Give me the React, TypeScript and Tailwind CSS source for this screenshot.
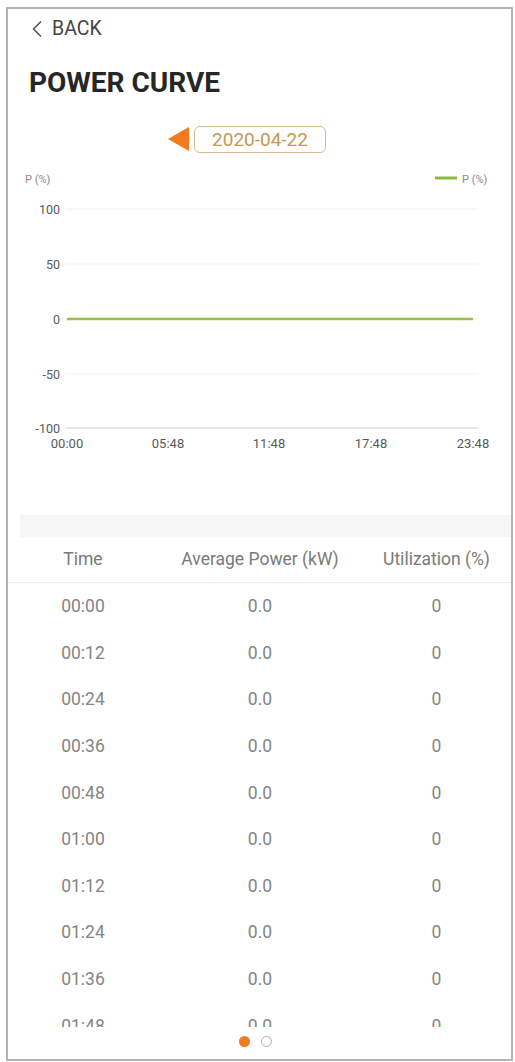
import React from 'react';

// Power curve screen: header, date picker, percent chart and 12-minute table
const Y_TICKS = [
  { label: '100', y: 48 },
  { label: '50', y: 103 },
  { label: '0', y: 158 },
  { label: '-50', y: 213 },
  { label: '-100', y: 267 },
];

const X_TICKS = [
  { label: '00:00', x: 59 },
  { label: '05:48', x: 160 },
  { label: '11:48', x: 261 },
  { label: '17:48', x: 363 },
  { label: '23:48', x: 465 },
];

const rows = ['00:00', '00:12', '00:24', '00:36', '00:48', '01:00', '01:12', '01:24', '01:36', '01:48'];

const PowerChart = () => (
  <svg width="503" height="300" viewBox="0 0 503 300" className="block" style={{ fontFamily: 'Roboto, sans-serif' }}>
    <text x="17" y="22" fontSize="11" fill="#8a8a8a">P (%)</text>
    <line x1="427" y1="17" x2="449" y2="17" stroke="#8fb83e" strokeWidth="3" />
    <text x="454" y="22" fontSize="11" fill="#8a8a8a">P (%)</text>

    {Y_TICKS.map((t) => (
      <g key={t.label}>
        <line
          x1="58"
          y1={t.y}
          x2="470"
          y2={t.y}
          stroke={t.label === '-100' ? '#cfcfcf' : '#f1f1f1'}
          strokeWidth="1"
        />
        <text x="52" y={t.y + 4.5} fontSize="12.5" fill="#5a5a5a" textAnchor="end">
          {t.label}
        </text>
      </g>
    ))}

    <line x1="59" y1="158" x2="465" y2="158" stroke="#9cc142" strokeWidth="2.5" />

    {X_TICKS.map((t) => (
      <text key={t.label} x={t.x} y="287" fontSize="13" fill="#5a5a5a" textAnchor="middle">
        {t.label}
      </text>
    ))}
  </svg>
);

const App = () => {
  return (
    <div className="w-[515px] h-[1062px] bg-white overflow-hidden font-['Roboto',sans-serif]">
      <div className="ml-[6px] mt-[7px] w-[507px] h-[1054px] border-2 border-[#b4b4b4] flex flex-col bg-white">
        {/* Back link */}
        <div className="h-[39px] flex items-center pl-[23px] pt-[1px] gap-[9px] text-[#454545]">
          <svg width="12" height="18" viewBox="0 0 12 18">
            <path d="M10 1.5 L2.5 9 L10 16.5" fill="none" stroke="#555" strokeWidth="1.6" />
          </svg>
          <span className="text-[19.5px] leading-none">BACK</span>
        </div>

        {/* Title */}
        <div className="h-[69px] flex items-center pl-[21px]">
          <h1 className="text-[28px] font-bold text-[#262626] leading-none">POWER CURVE</h1>
        </div>

        {/* Date selector */}
        <div className="h-[44px] flex items-center pl-[160px] gap-[5px]">
          <svg width="21" height="24" viewBox="0 0 21 24">
            <path d="M0 12 L21 0 L21 24 Z" fill="#f07a1c" />
          </svg>
          <div className="h-[27px] w-[132px] rounded-[6px] border-[1.5px] border-[#d9b88c] flex items-center justify-center text-[19px] leading-none text-[#c4994f]">
            2020-04-22
          </div>
        </div>

        <PowerChart />

        <div className="h-[54px]" />
        <div className="h-[22px] ml-[12px] bg-[#f6f6f6]" />

        {/* Table */}
        <div className="h-[46px] grid grid-cols-[150px_204px_1fr] items-center border-b border-[#eeeeee] text-[17.5px] text-[#7a7a7a]">
          <div className="text-center">Time</div>
          <div className="text-center">Average Power (kW)</div>
          <div className="text-center">Utilization (%)</div>
        </div>
        <div className="h-[444px] overflow-hidden">
          {rows.map((t) => (
            <div key={t} className="h-[46.6px] grid grid-cols-[150px_204px_1fr] items-center text-[17.5px] text-[#858585]">
              <div className="text-center">{t}</div>
              <div className="text-center">0.0</div>
              <div className="text-center">0</div>
            </div>
          ))}
        </div>

        {/* Page dots */}
        <div className="flex-1 flex justify-center gap-[11px] pt-[9px] pr-[8px]">
          <span className="w-[11px] h-[11px] rounded-full bg-[#ee7d22]" />
          <span className="w-[11px] h-[11px] rounded-full border-[1.5px] border-[#b0b0b0]" />
        </div>
      </div>
    </div>
  );
};

export default App;
